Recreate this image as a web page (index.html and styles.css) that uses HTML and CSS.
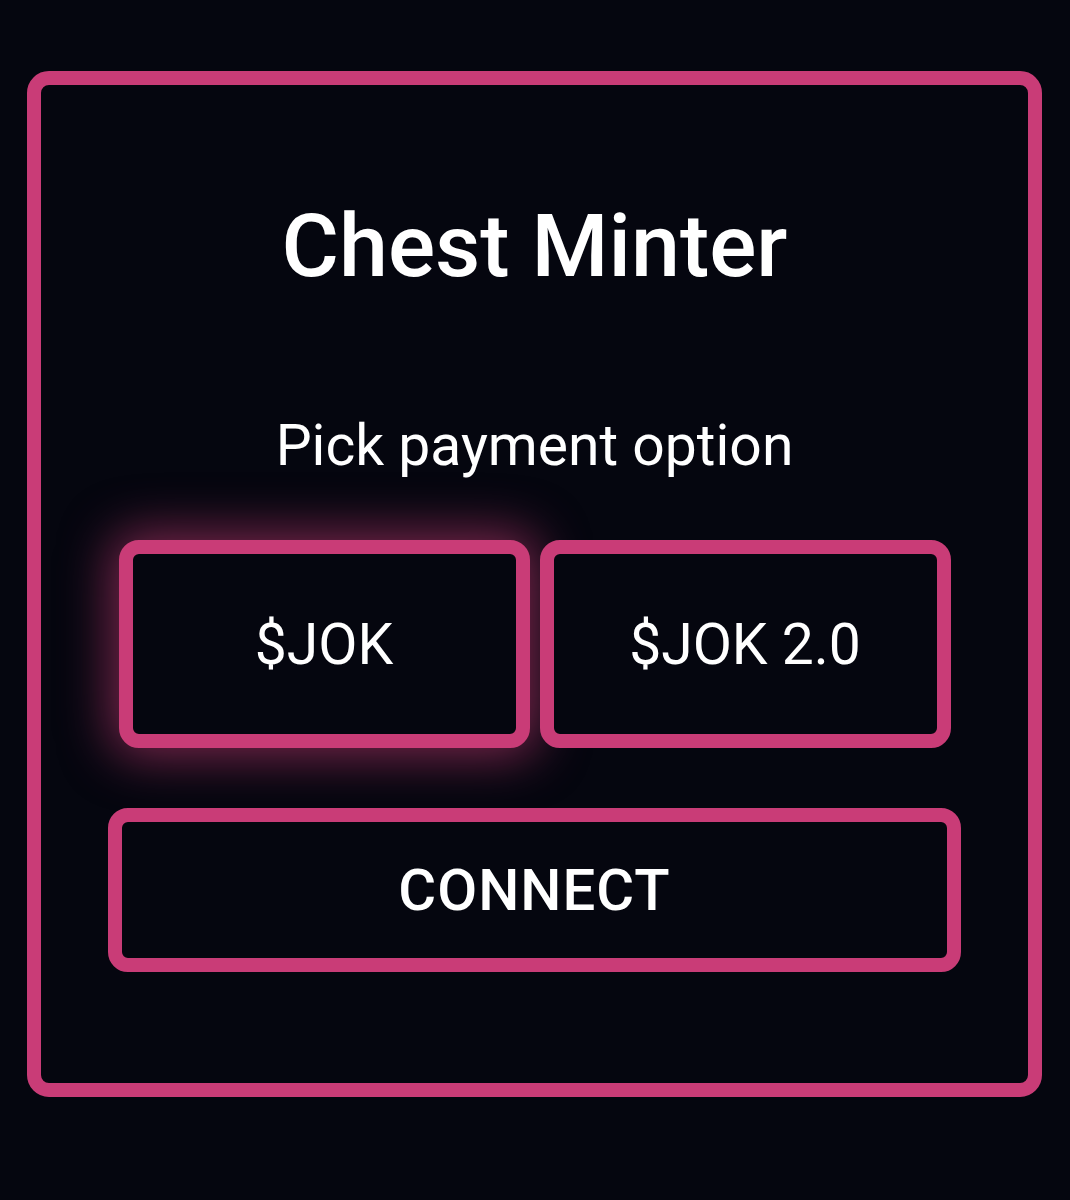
FILE: index.html
```html
<!DOCTYPE html>
<html lang="en">
<head>
    <meta charset="UTF-8">
    <link rel="stylesheet" href="styles.css">
</head>
<body>

<div class="minter">
    <h1 class="title">Chest Minter</h1>
    <p class="subtitle">Pick payment option</p>

    <div class="options">
        <button class="option active">$JOK</button>
        <button class="option">$JOK 2.0</button>
    </div>

    <button class="connect">CONNECT</button>
</div>

</body>
</html>
```

FILE: styles.css
```css
body {
    margin: 0;
    padding: 71px 0 0 27px;
    background: #05060f;
    font-family: Roboto, "Noto Sans", sans-serif;
    color: #fff;
}
.minter {
    box-sizing: border-box;
    width: 1015px;
    height: 1026px;
    border: 14px solid #c93c77;
    border-radius: 22px;
    display: flex;
    flex-direction: column;
    align-items: center;
}
.title {
    margin: 117px 0 0;
    font-size: 88px;
    font-weight: 500;
    line-height: 1;
}
.subtitle {
    margin: 127px 0 0;
    font-size: 57px;
    font-weight: 400;
    line-height: 1;
}
.options {
    display: flex;
    gap: 10px;
    margin-top: 66px;
}
button {
    box-sizing: border-box;
    background: #05060f;
    color: #fff;
    font-family: Roboto, "Noto Sans", sans-serif;
    border: 14px solid #c93c77;
    border-radius: 20px;
    cursor: pointer;
}
.option {
    width: 411px;
    height: 208px;
    font-size: 57px;
    font-weight: 400;
}
.option.active {
    box-shadow: 0 0 50px 8px rgba(201, 60, 119, 0.6);
}
.connect {
    width: 853px;
    height: 164px;
    margin-top: 60px;
    font-size: 58px;
    font-weight: 500;
    letter-spacing: 1px;
}
```
